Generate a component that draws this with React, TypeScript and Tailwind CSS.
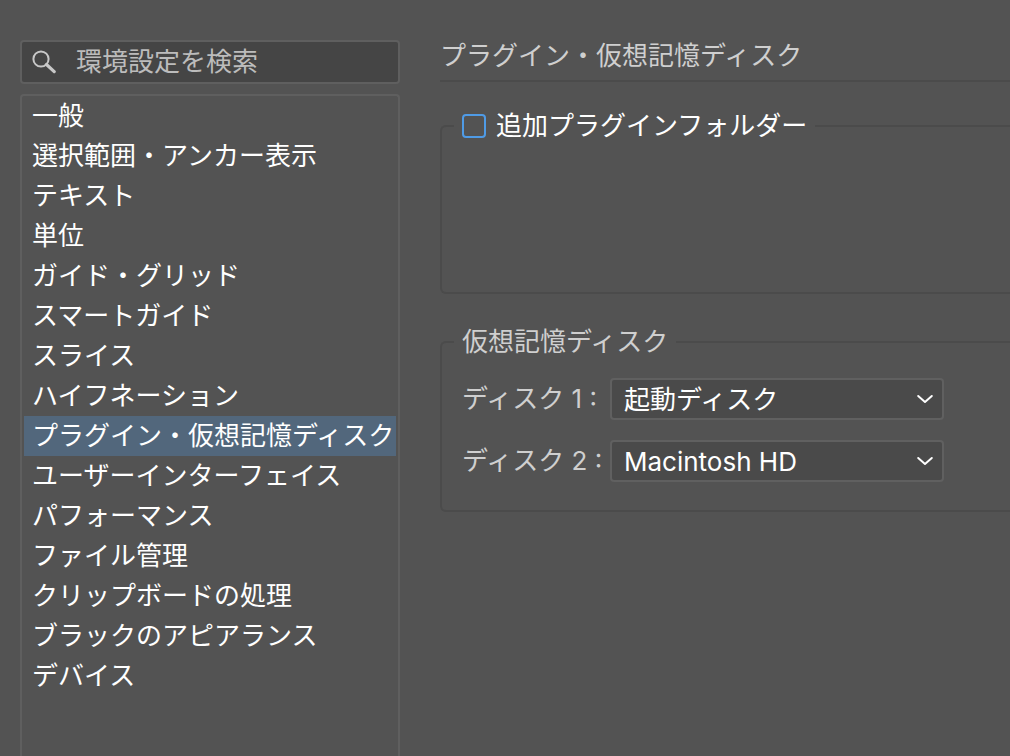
import { useState } from "react";
import clsx from "clsx";

const categories = [
  "一般",
  "選択範囲・アンカー表示",
  "テキスト",
  "単位",
  "ガイド・グリッド",
  "スマートガイド",
  "スライス",
  "ハイフネーション",
  "プラグイン・仮想記憶ディスク",
  "ユーザーインターフェイス",
  "パフォーマンス",
  "ファイル管理",
  "クリップボードの処理",
  "ブラックのアピアランス",
  "デバイス",
];

const disks = ["起動ディスク", "Macintosh HD"];

function SearchIcon() {
  return (
    <svg width="24" height="24" viewBox="0 0 24 24" fill="none" stroke="#c8c8c8" aria-hidden="true">
      <circle cx="9" cy="9" r="7.6" strokeWidth="2" />
      <path d="M14.5 14.5 22.2 21.6" strokeWidth="3.2" strokeLinecap="round" />
    </svg>
  );
}

type DiskSelectProps = {
  id: string;
  label: string;
  value: string;
  onChange: (value: string) => void;
};

function DiskSelect({ id, label, value, onChange }: DiskSelectProps) {
  return (
    <div className="flex items-center">
      <label htmlFor={id} className="w-37 shrink-0 whitespace-pre text-[#cfcfcf]">
        {label}
      </label>
      <div className="relative w-full max-w-[334px]">
        <select
          id={id}
          value={value}
          onChange={(e) => onChange(e.target.value)}
          className="block h-[42px] w-full appearance-none rounded-sm border-2 border-[#606060] bg-[#4a4a4a] pl-3 pr-10 text-white outline-none"
        >
          {disks.map((disk) => (
            <option key={disk}>{disk}</option>
          ))}
        </select>
        {/* Arrow over the select */}
        <svg
          className="pointer-events-none absolute right-2.5 top-4"
          width="18"
          height="10"
          viewBox="0 0 18 10"
          fill="none"
          stroke="#ffffff"
          strokeWidth="2"
          strokeLinecap="round"
          strokeLinejoin="round"
          aria-hidden="true"
        >
          <path d="M2.2 2 9 8 15.8 2" />
        </svg>
      </div>
    </div>
  );
}

export default function App() {
  const [query, setQuery] = useState("");
  const [active, setActive] = useState("プラグイン・仮想記憶ディスク");
  const [extraFolder, setExtraFolder] = useState(false);
  const [disk1, setDisk1] = useState("起動ディスク");
  const [disk2, setDisk2] = useState("Macintosh HD");

  return (
    <div className="flex min-h-screen bg-[#535353] pl-5 pt-10 font-['Inter','Noto_Sans_CJK_JP',sans-serif] text-[26px] leading-10 text-white">
      {/* Sidebar */}
      <aside className="flex w-[380px] shrink-0 flex-col gap-2.5">
        <label className="flex h-11 items-center gap-5 rounded-sm border-2 border-[#5f5f5f] bg-[#454545] pl-2.5">
          <SearchIcon />
          <input
            type="text"
            value={query}
            onChange={(e) => setQuery(e.target.value)}
            placeholder="環境設定を検索"
            aria-label="環境設定を検索"
            className="h-10 min-w-0 flex-1 bg-transparent text-white outline-none placeholder:text-[#bcbcbc]"
          />
        </label>

        <nav className="flex-1 rounded-t-sm border-2 border-b-0 border-[#5f5f5f] px-0.5">
          <ul>
            {categories.map((name) => (
              <li key={name}>
                <button
                  type="button"
                  onClick={() => setActive(name)}
                  className={clsx(
                    "block h-10 w-full whitespace-nowrap pl-2 text-left",
                    name === active && "bg-[#52677c]"
                  )}
                >
                  {name}
                </button>
              </li>
            ))}
          </ul>
        </nav>
      </aside>

      {/* Settings */}
      <main className="min-w-0 flex-1 pl-10">
        <h1 className="border-b-2 border-[#4b4b4b] pb-2 leading-8 text-[#cfcfcf]">プラグイン・仮想記憶ディスク</h1>

        <fieldset className="mt-6 min-h-[188px] rounded-l-md border-2 border-r-0 border-[#4b4b4b]">
          <legend className="ml-3 px-2">
            <label className="flex items-center gap-2.5">
              <input
                type="checkbox"
                checked={extraFolder}
                onChange={(e) => setExtraFolder(e.target.checked)}
                className="size-6 appearance-none rounded-sm border-2 border-[#4f9be6] checked:bg-[#4f9be6]"
              />
              追加プラグインフォルダー
            </label>
          </legend>
        </fieldset>

        <fieldset className="mt-7 rounded-l-md border-2 border-r-0 border-[#4b4b4b] pb-7 pl-5">
          <legend className="-ml-2 px-2 text-[#cfcfcf]">仮想記憶ディスク</legend>
          <div className="flex flex-col gap-5 pt-4">
            <DiskSelect id="disk1" label="ディスク 1 :" value={disk1} onChange={setDisk1} />
            <DiskSelect id="disk2" label="ディスク 2 :" value={disk2} onChange={setDisk2} />
          </div>
        </fieldset>
      </main>
    </div>
  );
}
